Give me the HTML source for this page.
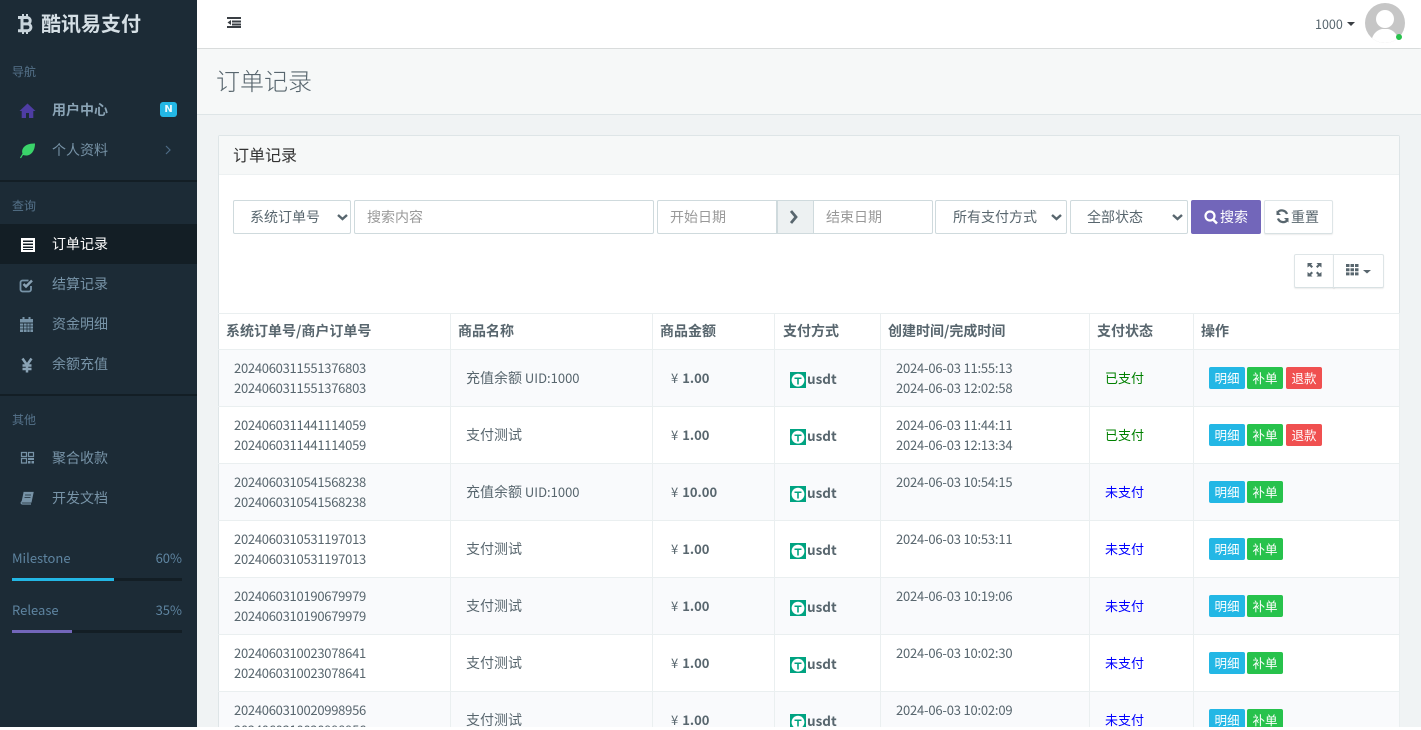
<!DOCTYPE html>
<html lang="zh-CN"><head><meta charset="utf-8"><title>订单记录</title>
<style>
*{box-sizing:border-box}
html,body{margin:0;padding:0;width:1421px;height:730px;overflow:hidden;background:#fff}
body{font-family:"Liberation Sans","Noto Sans CJK SC",sans-serif;font-size:14px;color:#58666e}
.cjk,body{font-family:"Noto Sans CJK SC","Liberation Sans",sans-serif}
#page{position:absolute;left:0;top:0;width:1421px;height:727px;overflow:hidden;background:#f0f3f4}
.a{position:absolute;white-space:nowrap}
#side{position:absolute;left:0;top:0;width:197px;height:727px;background:#1c2b36;color:#7793a7}
.nav{position:absolute;left:52px;height:20px;line-height:20px;font-size:14px;white-space:nowrap}
.lab{position:absolute;left:12px;height:16px;line-height:16px;font-size:12px;color:#55728a;white-space:nowrap}
.div{position:absolute;left:0;width:197px;height:2px;background:#131e25}
.bar{position:absolute;left:12px;width:170px;height:3px;background:#131e25}
.bar i{display:block;height:3px}
.ms{position:absolute;left:12px;width:170px;font-size:13px;line-height:18px;color:#5e84a0;display:flex;justify-content:space-between}
#top{position:absolute;left:197px;top:0;width:1224px;height:48px;background:#fff;box-shadow:0 1px 2px rgba(0,0,0,.14)}
#title{position:absolute;left:197px;top:49px;width:1224px;height:66px;background:#f6f8f8;border-bottom:1px solid #dee5e7}
#title span{position:absolute;left:19px;top:13px;font-size:24px;line-height:36px;font-weight:300;color:#58666e}
#panel{position:absolute;left:218px;top:135px;width:1182px;height:600px;background:#fff;border:1px solid #dee5e7;border-radius:2px}
#phead{position:absolute;left:0;top:0;width:1180px;height:39px;background:#f6f8f8;border-bottom:1px solid #edf1f2;font-size:16px;line-height:36px;padding-left:14px;color:#333}
.ctl{position:absolute;top:200px;height:34px;background:#fff;border:1px solid #cfdadd;border-radius:2px;font-size:14px;line-height:32px;color:#58666e;white-space:nowrap}
.ph{color:#999}
.btn{position:absolute;background:#fff;border:1px solid #dee5e7;border-bottom-color:#d8e1e3;border-radius:2px;box-shadow:0 1px 1px rgba(90,90,90,.1)}
table{position:absolute;left:218px;top:313px;width:1181px;table-layout:fixed;border-collapse:collapse;font-size:13px}
th,td{border:1px solid #eaeff0;padding:0}
th:first-child,td:first-child{border-left-color:#dee5e7}
th{height:36px;text-align:left;padding:0 0 2px 7px;font-weight:700;font-size:14px;color:#58666e;line-height:20px;white-space:nowrap}
td{height:57px;padding-left:15px;vertical-align:middle;line-height:20px;white-space:nowrap;font-size:13px}
tr.s td{background:#f9fafc}
.num{letter-spacing:-.27px}
.nm{font-size:13px}
.nm b{font-weight:400;font-size:14px}
.am{font-weight:700;padding-left:18px}
.am i{font-style:normal;font-weight:400;margin-right:4px}
.pay{padding-left:15px;font-weight:700;font-size:13.5px}
.pay svg{vertical-align:-4px;margin-right:1px}
.ok{color:green}.no{color:#00f}
.b{display:inline-block;width:36px;height:22px;line-height:21px;text-align:center;color:#fff;font-size:12.5px;border-radius:2px;margin-right:2px;vertical-align:middle;position:relative;top:0}
.c1{background:#23b7e5}.c2{background:#27c24c}.c3{background:#f05050;margin-left:1px}
</style></head><body>
<div id="page">

<div id="top"></div>
<div class="a" style="left:1315px;top:14px;font-size:12.5px;line-height:20px;color:#58666e">1000</div>
<div id="title"><span>订单记录</span></div>

<div id="panel"><div id="phead">订单记录</div></div>

<div class="ctl" style="left:233px;width:118px;padding-left:16px">系统订单号</div>
<div class="ctl ph" style="left:354px;width:300px;padding-left:12px">搜索内容</div>
<div class="ctl ph" style="left:657px;width:120px;padding-left:12px;border-radius:2px 0 0 2px">开始日期</div>
<div class="ctl" style="left:777px;width:37px;background:#edf1f2;border-radius:0"></div>
<div class="ctl ph" style="left:813px;width:120px;padding-left:12px;border-radius:0 2px 2px 0">结束日期</div>
<div class="ctl" style="left:935px;width:132px;padding-left:17px">所有支付方式</div>
<div class="ctl" style="left:1070px;width:118px;padding-left:16px">全部状态</div>
<div class="a" style="left:1191px;top:200px;width:70px;height:34px;background:#7266ba;border-radius:2px;color:#fff;font-size:14px;line-height:34px;padding-left:29px">搜索</div>
<div class="btn" style="left:1264px;top:200px;width:69px;height:34px;font-size:14px;line-height:33px;padding-left:26px">重置</div>
<div class="btn" style="left:1294px;top:254px;width:41px;height:34px;border-radius:2px 0 0 2px"></div>
<div class="btn" style="left:1333px;top:254px;width:51px;height:34px;border-radius:0 2px 2px 0"></div>

<table>
<colgroup><col style="width:232px"><col style="width:202px"><col style="width:122px"><col style="width:106px"><col style="width:209px"><col style="width:104px"><col style="width:206px"></colgroup>
<thead><tr><th>系统订单号/商户订单号</th><th>商品名称</th><th>商品金额</th><th style="padding-left:8px">支付方式</th><th>创建时间/完成时间</th><th>支付状态</th><th>操作</th></tr></thead>
<tbody>
<tr class="s"><td class="num">2024060311551376803<br>2024060311551376803</td><td class="nm"><b>充值余额</b> UID:1000</td><td class="am"><i>¥</i>1.00</td><td class="pay"><svg width="16" height="16" viewBox="0 0 16 16"><rect width="16" height="16" fill="#00a381"/><circle cx="8" cy="8.200" r="6.400" fill="#fff"/><path d="M4.500 5.500h7v1.500H8.800v5.500H7.200V7H4.500z" fill="#00a381"/></svg>usdt</td><td class="num" style="letter-spacing:-.2px">2024-06-03 11:55:13<br>2024-06-03 12:02:58</td><td class="ok">已支付</td><td><span class="b c1">明细</span><span class="b c2">补单</span><span class="b c3">退款</span></td></tr>
<tr><td class="num">2024060311441114059<br>2024060311441114059</td><td class="nm"><b>支付测试</b></td><td class="am"><i>¥</i>1.00</td><td class="pay"><svg width="16" height="16" viewBox="0 0 16 16"><rect width="16" height="16" fill="#00a381"/><circle cx="8" cy="8.200" r="6.400" fill="#fff"/><path d="M4.500 5.500h7v1.500H8.800v5.500H7.200V7H4.500z" fill="#00a381"/></svg>usdt</td><td class="num" style="letter-spacing:-.2px">2024-06-03 11:44:11<br>2024-06-03 12:13:34</td><td class="ok">已支付</td><td><span class="b c1">明细</span><span class="b c2">补单</span><span class="b c3">退款</span></td></tr>
<tr class="s"><td class="num">2024060310541568238<br>2024060310541568238</td><td class="nm"><b>充值余额</b> UID:1000</td><td class="am"><i>¥</i>10.00</td><td class="pay"><svg width="16" height="16" viewBox="0 0 16 16"><rect width="16" height="16" fill="#00a381"/><circle cx="8" cy="8.200" r="6.400" fill="#fff"/><path d="M4.500 5.500h7v1.500H8.800v5.500H7.200V7H4.500z" fill="#00a381"/></svg>usdt</td><td class="num" style="letter-spacing:-.2px">2024-06-03 10:54:15<br>&nbsp;</td><td class="no">未支付</td><td><span class="b c1">明细</span><span class="b c2">补单</span></td></tr>
<tr><td class="num">2024060310531197013<br>2024060310531197013</td><td class="nm"><b>支付测试</b></td><td class="am"><i>¥</i>1.00</td><td class="pay"><svg width="16" height="16" viewBox="0 0 16 16"><rect width="16" height="16" fill="#00a381"/><circle cx="8" cy="8.200" r="6.400" fill="#fff"/><path d="M4.500 5.500h7v1.500H8.800v5.500H7.200V7H4.500z" fill="#00a381"/></svg>usdt</td><td class="num" style="letter-spacing:-.2px">2024-06-03 10:53:11<br>&nbsp;</td><td class="no">未支付</td><td><span class="b c1">明细</span><span class="b c2">补单</span></td></tr>
<tr class="s"><td class="num">2024060310190679979<br>2024060310190679979</td><td class="nm"><b>支付测试</b></td><td class="am"><i>¥</i>1.00</td><td class="pay"><svg width="16" height="16" viewBox="0 0 16 16"><rect width="16" height="16" fill="#00a381"/><circle cx="8" cy="8.200" r="6.400" fill="#fff"/><path d="M4.500 5.500h7v1.500H8.800v5.500H7.200V7H4.500z" fill="#00a381"/></svg>usdt</td><td class="num" style="letter-spacing:-.2px">2024-06-03 10:19:06<br>&nbsp;</td><td class="no">未支付</td><td><span class="b c1">明细</span><span class="b c2">补单</span></td></tr>
<tr><td class="num">2024060310023078641<br>2024060310023078641</td><td class="nm"><b>支付测试</b></td><td class="am"><i>¥</i>1.00</td><td class="pay"><svg width="16" height="16" viewBox="0 0 16 16"><rect width="16" height="16" fill="#00a381"/><circle cx="8" cy="8.200" r="6.400" fill="#fff"/><path d="M4.500 5.500h7v1.500H8.800v5.500H7.200V7H4.500z" fill="#00a381"/></svg>usdt</td><td class="num" style="letter-spacing:-.2px">2024-06-03 10:02:30<br>&nbsp;</td><td class="no">未支付</td><td><span class="b c1">明细</span><span class="b c2">补单</span></td></tr>
<tr class="s"><td class="num">2024060310020998956<br>2024060310020998956</td><td class="nm"><b>支付测试</b></td><td class="am"><i>¥</i>1.00</td><td class="pay"><svg width="16" height="16" viewBox="0 0 16 16"><rect width="16" height="16" fill="#00a381"/><circle cx="8" cy="8.200" r="6.400" fill="#fff"/><path d="M4.500 5.500h7v1.500H8.800v5.500H7.200V7H4.500z" fill="#00a381"/></svg>usdt</td><td class="num" style="letter-spacing:-.2px">2024-06-03 10:02:09<br>&nbsp;</td><td class="no">未支付</td><td><span class="b c1">明细</span><span class="b c2">补单</span></td></tr>
</tbody></table>

<!-- main-area icons -->
<svg class="a" style="left:0;top:0" width="1421" height="727" viewBox="0 0 1421 727">
  <!-- toggle -->
  <path d="M227 17h14v2h-14zM232 20.500h9v2h-9zM227 26h14v2h-14zM232 23.500h9v2h-9z" fill="#3a3f44"/>
  <path d="M231 20v5l-3.500-2.500z" fill="#3a3f44"/>
  <!-- user caret + avatar -->
  <path d="M1347 22h8l-4 4z" fill="#3a3f44"/>
  <clipPath id="av"><circle cx="1385" cy="23" r="20"/></clipPath>
  <circle cx="1385" cy="23" r="20" fill="#c6c6c6"/>
  <g clip-path="url(#av)" fill="#fff"><circle cx="1385" cy="19" r="9"/><path d="M1371 43c1-9 6-13 11-14h6c5 1 10 5 11 14z"/></g>
  <circle cx="1399" cy="37" r="3" fill="#27c24c"/>
  <!-- form icons -->
  <path d="M791 211l5 6-5 6" fill="none" stroke="#58666e" stroke-width="2.800"/>
  <path d="M1054 215l4.500 4 4.500-4" transform="translate(-2 0)" fill="none" stroke="#58666e" stroke-width="2.400"/>
  <path d="M340 215l4.500 4 4.500-4" transform="translate(-2 0)" fill="none" stroke="#58666e" stroke-width="2.400"/>
  <path d="M1175 215l4.500 4 4.500-4" transform="translate(-2 0)" fill="none" stroke="#58666e" stroke-width="2.400"/>
  <circle cx="1210" cy="216" r="4.500" fill="none" stroke="#fff" stroke-width="2.200"/>
  <path d="M1213 219.500l4 4" stroke="#fff" stroke-width="2.600"/>
  <path d="M1287 214a5.500 5.500 0 0 0-9.500-1.500M1278 218.500a5.500 5.500 0 0 0 9.500 1.500" fill="none" stroke="#58666e" stroke-width="2.300"/>
  <path d="M1276.500 210.500v4.500h4.500zM1288.500 222.500v-4.500h-4.500z" fill="#58666e"/>
  <!-- fullscreen -->
  <path d="M1307.500 263h5l-1.500 1.500 2 2-1.500 1.500-2-2-2 1.500zM1321.500 263h-5l1.500 1.500-2 2 1.500 1.500 2-2 2 1.500zM1307.500 276.500h5l-1.500-1.500 2-2-1.500-1.500-2 2-2-1.500zM1321.500 276.500h-5l1.500-1.500-2-2 1.500-1.500 2 2 2-1.500z" fill="#58666e"/>
  <!-- columns -->
  <path d="M1346 264h3.500v3h-3.500zM1350.500 264h3.500v3h-3.500zM1355 264h3.500v3h-3.500zM1346 268.200h3.500v3h-3.500zM1350.500 268.200h3.500v3h-3.500zM1355 268.200h3.500v3h-3.500zM1346 272.400h3.500v3h-3.500zM1350.500 272.400h3.500v3h-3.500zM1355 272.400h3.500v3h-3.500z" fill="#58666e"/>
  <path d="M1363 270h8l-4 3.500z" fill="#58666e"/>
</svg>

<div id="side">
  <div class="a" style="left:41px;top:8px;font-size:20px;line-height:29px;font-weight:700;color:#d5dfe5">酷讯易支付</div>
  <div class="lab" style="top:64px">导航</div>
  <div class="nav" style="top:100px;font-weight:700;color:#8aa3b5">用户中心</div>
  <div class="a" style="left:160px;top:102px;width:17px;height:15px;background:#23b7e5;border-radius:3px;color:#e8f8fd;font:700 10px/15px 'DejaVu Sans',sans-serif;text-align:center">N</div>
  <div class="nav" style="top:140px">个人资料</div>
  <div class="div" style="top:180px"></div>
  <div class="lab" style="top:198px">查询</div>
  <div class="a" style="left:0;top:224px;width:197px;height:40px;background:#131e25"></div>
  <div class="nav" style="top:234px;color:#fff">订单记录</div>
  <div class="nav" style="top:274px">结算记录</div>
  <div class="nav" style="top:314px">资金明细</div>
  <div class="nav" style="top:354px">余额充值</div>
  <div class="div" style="top:394px"></div>
  <div class="lab" style="top:412px">其他</div>
  <div class="nav" style="top:448px">聚合收款</div>
  <div class="nav" style="top:488px">开发文档</div>
  <div class="ms" style="top:549px"><span>Milestone</span><span>60%</span></div>
  <div class="bar" style="top:578px"><i style="width:102px;background:#23b7e5"></i></div>
  <div class="ms" style="top:601px"><span>Release</span><span>35%</span></div>
  <div class="bar" style="top:630px"><i style="width:60px;background:#7266ba"></i></div>
  <svg class="a" style="left:0;top:0" width="197" height="727" viewBox="0 0 197 727">
    <!-- bitcoin -->
    <path d="M18 17.500h9a3.200 3.200 0 0 1 0 6.400h-5M22 23.900h5.500a3.400 3.400 0 0 1 0 6.800H18M22 17.500v13" fill="none" stroke="#c9d5dc" stroke-width="3"/>
    <path d="M22 14h2v3h-2zM26 14h2v3h-2zM22 31h2v3h-2zM26 31h2v3h-2z" fill="#c9d5dc"/>
    <!-- home -->
    <path d="M27.500 103.500l8 7.500h-2.200v7h-4.300v-5h-3v5h-4.300v-7h-2.200z" fill="#4e3da3"/>
    <!-- chevron -->
    <path d="M166 146l4 4-4 4" fill="none" stroke="#4d6a85" stroke-width="1.200"/>
    <!-- leaf -->
    <path d="M23 155c-3-6 2-12 12-11.500 0 7.500-4.500 14-12 11.500z" fill="#3ad46a"/>
    <path d="M20.500 158c2-4 6-8 10-10" fill="none" stroke="#3ad46a" stroke-width="1.200"/>
    <!-- list-alt -->
    <rect x="21" y="238" width="14" height="14" fill="#fff"/>
    <path d="M23 240.500h10v1.500H23zM23 243.500h10v1.500H23zM23 246.500h10v1.500H23zM23 249h10v1H23z" fill="#131e25"/>
    <!-- check-square -->
    <path d="M31 286v3.500a2 2 0 0 1-2 2h-6.500a2 2 0 0 1-2-2v-7a2 2 0 0 1 2-2h6" fill="none" stroke="#7793a7" stroke-width="1.800"/>
    <path d="M23.500 284l2.500 2.500 6-6" fill="none" stroke="#8aa3b5" stroke-width="2.500"/>
    <!-- calendar -->
    <path d="M20 319h13v3.500H20zM22.500 317h2v2h-2zM28.500 317h2v2h-2z" fill="#7793a7"/>
    <path d="M20 323.500h13V332H20z" fill="#7793a7"/>
    <path d="M20 326h13M20 329h13M23.500 323.500V332M27 323.500V332M30 323.500V332" stroke="#1c2b36" stroke-width=".7"/>
    <!-- yen -->
    <path d="M22.500 358.500l4.500 6.500 4.500-6.500M27 365v7.500M22.500 365.500h9M22.500 369h9" fill="none" stroke="#8aa3b5" stroke-width="2.500"/>
    <!-- qrcode -->
    <path d="M21.500 452.500h5v4h-5zM28.500 452.500h5v4h-5zM21.500 458.500h5v4.500h-5z" fill="none" stroke="#7793a7" stroke-width="1.200"/>
    <path d="M28 458h6v2h-6zM28 461h2.500v2.500H28zM31.500 461H34v2.500h-2.500z" fill="#7793a7"/>
    <!-- book -->
    <path d="M23.500 492.500h9.500l-2 9.500h-9.500c-1 1 0 2 1 2h8.500" fill="none" stroke="#7793a7" stroke-width="1.200"/>
    <path d="M23.500 492.500h9.500l-2 9.500h-9.500z" fill="#7793a7"/>
    <path d="M25 495h6M24.500 497.500h6" stroke="#1c2b36" stroke-width=".8"/>
  </svg>
</div>
</div>
</body></html>
